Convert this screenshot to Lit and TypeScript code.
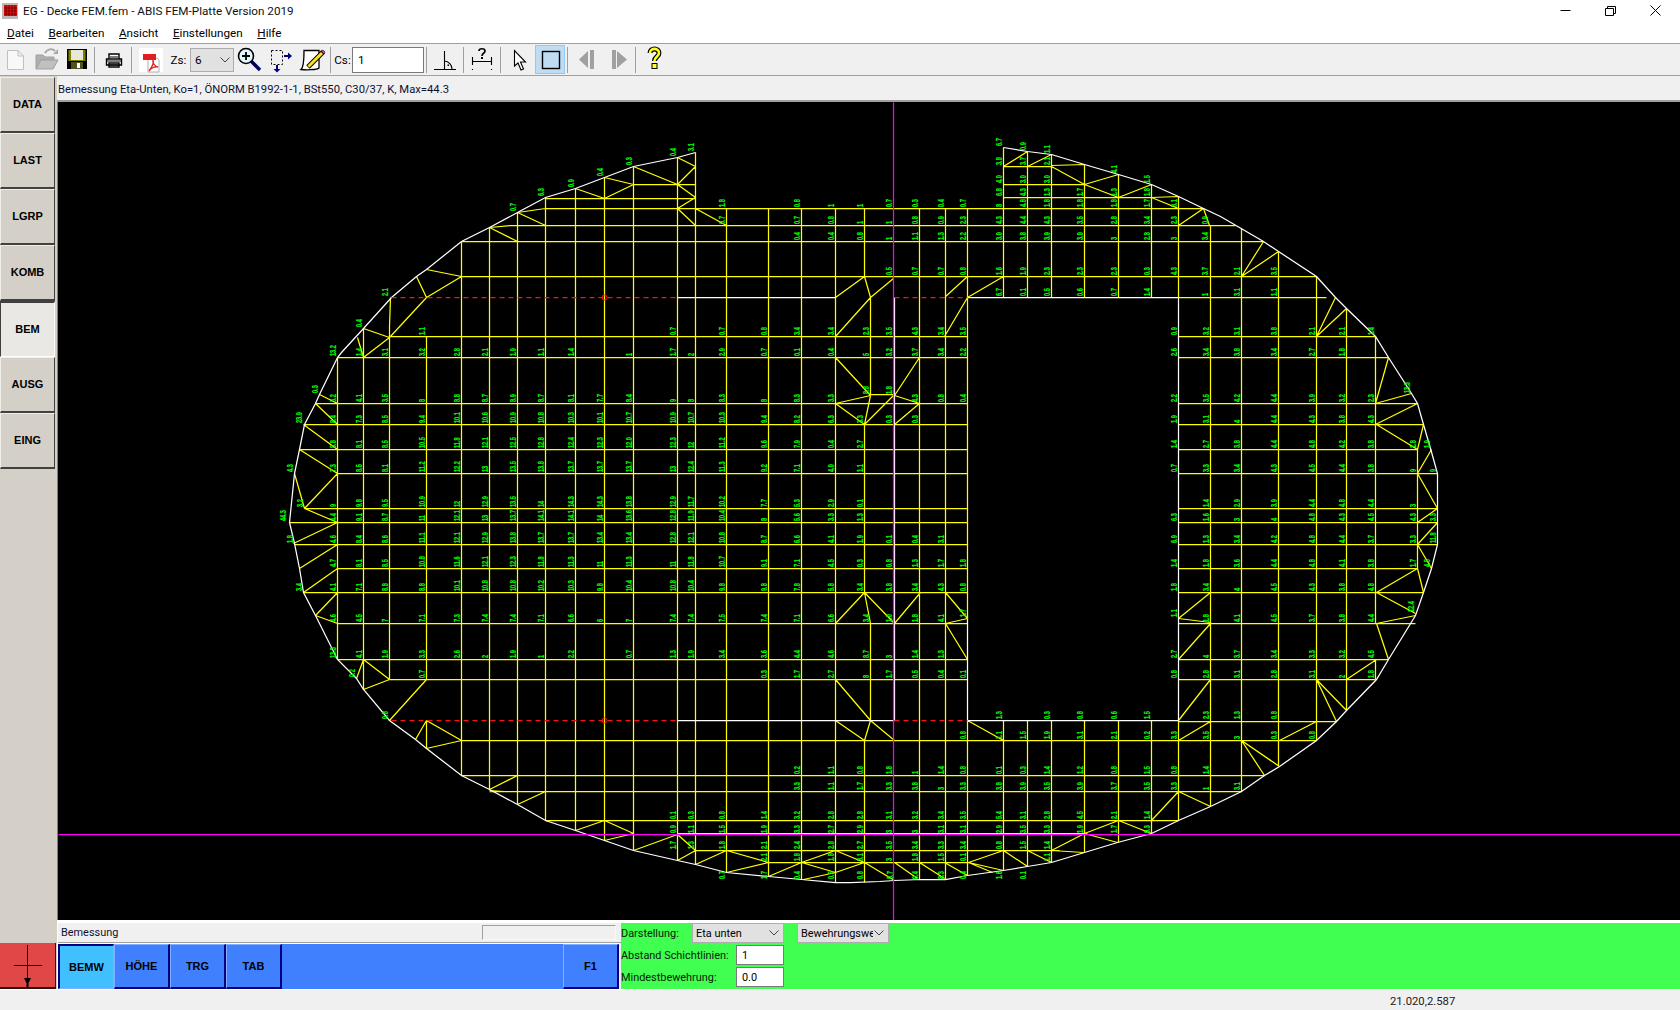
import { LitElement, html, css, svg } from "lit";
import { customElement } from "lit/decorators.js";

// mesh data, all coordinates are page pixels (svg viewBox starts at 58,102)
const OUTLINE =
  "1003,147 1027,151 1051,154 1084,164 1118,174 1151,184 1178,196 1203,208 1220,216 1263,241 1278,251 1316,276 1335,297 1346,308 1375,336 1388,357 1411,393 1417,403 1423,424 1430,448 1437,473 1437,544 1431,568 1423,592 1415,615 1388,659 1376,679 1346,710 1336,721 1316,740 1279,766 1264,775 1241,791 1210,806 1178,820 1151,833 1117,842 1084,852 1051,862 1027,866 1003,870 967,875 945,879 920,879 894,880 879,881 850,882 835,882 801,879 768,876 726,872 695,864 677,860 633,850 604,840 575,830 545,820 517,804 489,789 461,775 426,748 415,739 389,720 363,689 356,678 337,659 315,615 303,592 299,568 294,543 289,522 294,473 299,449 304,424 315,403 319,394 337,357 341,352 363,328 391,297 416,276 426,269 461,241 489,227 517,212 545,197 575,188 604,177 633,166 677,157 695,152";

// [y, x1, x2, x1, x2 ...]
const H: number[][] = [
  [166, 1003, 1051], [184, 633, 695, 1003, 1084], [197, 1003, 1151], [198, 545, 695],
  [208, 545, 1203], [225, 510, 1235], [241, 461, 1263], [276, 461, 1316], [297, 1178, 1326],
  [336, 389, 967, 1178, 1375], [357, 337, 967, 1178, 1388], [403, 315, 967, 1178, 1417],
  [424, 304, 967, 1178, 1423], [449, 299, 967, 1178, 1417], [473, 337, 967, 1178, 1437],
  [508, 305, 967, 1178, 1437], [522, 289, 967, 1178, 1437], [544, 294, 967, 1178, 1437],
  [568, 337, 967, 1178, 1417], [592, 303, 967, 1178, 1423], [623, 337, 967, 1178, 1415],
  [659, 337, 967, 1178, 1388], [679, 389, 967, 1178, 1375], [721, 1178, 1336],
  [740, 461, 1316], [775, 461, 1264], [791, 489, 1241], [820, 545, 1178],
  [833, 677, 1087], [850, 695, 1059], [862, 768, 968],
];

// [x, y1, y2, y1, y2 ...]
const V: number[][] = [
  [337, 357, 659], [363, 328, 689], [389, 326, 679], [426, 336, 679, 720, 748],
  [461, 241, 775], [489, 227, 789], [517, 212, 804], [545, 197, 820], [575, 188, 830],
  [604, 177, 840], [633, 166, 850], [677, 157, 860], [695, 152, 864], [726, 208, 872],
  [768, 208, 876], [801, 208, 879], [835, 208, 882], [864, 208, 276, 424, 592, 740, 882],
  [870, 297, 395, 623, 720], [919, 208, 879], [945, 208, 879], [967, 208, 618, 720, 875],
  [1003, 147, 297, 720, 870], [1027, 151, 297, 720, 866], [1051, 154, 297, 720, 862],
  [1084, 164, 297, 720, 852], [1118, 174, 297, 720, 842], [1151, 184, 297, 720, 833],
  [1178, 196, 297, 720, 820], [1210, 225, 806], [1241, 228, 791], [1278, 251, 766],
  [1316, 276, 740], [1346, 308, 710], [1375, 336, 623, 659, 679], [1417, 449, 568],
];

const D =
  "677,157,695,166 695,166,677,184 677,184,695,197 695,197,677,208 677,208,695,225 695,208,726,225 633,166,677,184 604,177,633,184 633,184,604,198 575,188,604,198 517,212,545,208 517,212,545,225 489,227,510,225 489,227,517,241 426,269,461,276 426,297,461,276 416,276,426,297 426,297,389,337 363,328,389,337 389,337,363,357 357,337,363,357 390,297,389,326 319,394,337,403 315,403,337,424 " +
  "303,424,337,449 299,449,337,473 294,473,304,508 304,508,337,473 304,508,337,522 293,543,337,522 299,568,337,544 303,592,337,568 315,615,337,592 315,615,337,623 363,659,389,679 363,659,356,678 363,689,389,679 389,720,426,679 426,720,415,739 426,720,461,740 426,748,461,740 517,775,489,789 489,790,504,791 517,804,545,791 604,820,575,830 604,820,633,833 604,840,633,833 " +
  "633,850,677,834 677,834,695,850 677,860,695,850 695,864,726,850 726,850,768,862 726,872,768,862 768,876,801,862 801,862,835,872 835,872,803,879 835,850,801,862 835,850,864,862 835,872,864,862 864,862,894,880 894,862,917,878 919,862,944,878 944,862,967,875 " +
  "968,862,1003,850 968,862,992,872 968,862,1003,870 1003,850,1027,866 1027,850,1051,862 1051,850,1083,852 1051,850,1084,833 1084,833,1118,820 1118,820,1151,833 1084,833,1117,842 1151,820,1178,791 1178,791,1210,806 1178,740,1210,721 1241,740,1264,775 1241,740,1279,766 1279,740,1316,721 1316,679,1336,721 1316,679,1346,710 1346,679,1376,659 1376,623,1388,659 1376,623,1415,615 1376,592,1415,613 1376,592,1417,568 1417,568,1423,592 1417,544,1431,568 1417,544,1437,522 1417,522,1437,508 1417,473,1437,508 1417,473,1431,449 1417,449,1423,424 1376,424,1417,449 " +
  "1375,403,1411,393 1375,403,1388,357 1375,424,1417,403 1316,336,1335,297 1316,336,1346,308 1241,276,1263,241 1241,276,1278,251 1178,618,1210,592 1178,618,1210,622 1178,659,1210,623 1178,720,1210,679 835,623,864,592 864,592,870,623 864,592,894,623 894,623,920,592 945,592,967,618 945,623,967,618 945,623,967,659 835,679,870,720 870,720,894,740 870,720,864,740 835,720,864,740 967,720,1003,740 " +
  "835,297,864,276 864,276,870,297 835,336,870,297 870,297,893,278 944,297,967,276 967,297,1003,276 944,336,967,297 835,357,870,395 835,403,870,395 835,403,864,424 870,395,864,424 864,424,893,395 870,394,893,394 894,395,919,357 894,395,919,403 894,424,919,403 1003,166,1027,151 1027,166,1051,154 1051,166,1084,184 1084,184,1118,197 1084,184,1118,174 1118,197,1151,184 1151,197,1178,208 1178,225,1203,208 1203,208,1209,225 1051,165,1084,164 1151,197,1178,196";

const L = [337, 363, 389, 426, 461, 489, 517, 545, 575, 604, 633, 677, 695, 726, 768, 801, 835];
const C = [864, 893, 919, 945, 967];
const R = [1210, 1241, 1278, 1316, 1346, 1375];
const T = [1003, 1027, 1051, 1084, 1118, 1151, 1178];

type Lab = [number, number, string];
const labels: Lab[] = [];
const row = (y: number, cols: number[], vals: string) =>
  vals.split(" ").forEach((v, i) => {
    if (v !== "-") labels.push([cols[i], y, v]);
  });

row(152, [695], "3.1"); row(157, [677], "0.4"); row(166, [633], "0.3"); row(177, [604], "0.4");
row(188, [575], "0.9"); row(197, [545], "6.3"); row(212, [517], "0.7"); row(297, [389], "2.1");
row(328, [363], "0.4"); row(336, [426], "1.1"); row(394, [319], "0.3"); row(424, [303], "23.9");
row(473, [294], "4.3"); row(508, [304], "3.2"); row(522, [287], "44.3"); row(544, [294], "1.8");
row(592, [303], "3.4"); row(678, [356], "0.2"); row(720, [389], "0.8");
row(208, [726, 801, 893, 919, 945, 967], "1.8 0.8 0.7 0.3 0.4 0.7");
row(208, [835, 864], "1 1");
row(225, [726, 801, 835, 864, 893, 919, 945, 967], "0.7 0.7 0.8 1 1 0.8 0.9 2.3");
row(241, [801, 835, 864, 893, 919, 945, 967], "0.4 0.4 0.8 1 1.1 1.3 2.2");
row(276, [893, 919, 945, 967], "0.5 0.7 0.7 0.8");
row(336, [677, 726, 768, 801, 835, 870, 893, 919, 945, 967], "0.7 0.7 0.8 3.4 3.4 2.3 3.5 4.3 3.4 3.5");
row(357, L, "13.2 1.4 3.1 3.2 2.8 2.1 1.9 1.1 1.4 - 1 1.7 2 2.9 0.7 0.1 0.4");
row(357, [870, 893, 919, 945, 967], "5 3.2 3.7 3.4 2.2");
row(403, L, "3.2 4.1 3.5 8 8.8 8.7 8.9 8.7 8.1 7.7 8.4 9 8 8.3 8 8.3 3.3");
row(395, [870, 893], "8.8 1.8");
row(403, [919, 945, 967], "4.3 0.8 0.4");
row(424, L, "8.4 7.3 8.5 9.4 10.1 10.6 10.9 10.8 10.3 10.1 10.7 10.9 10.7 10.3 9.4 8.2 6.3");
row(424, C, "3.3 0.3 0.3 - -");
row(449, L, "8.8 8.1 8.5 10.5 11.8 12.1 12.5 12.8 12.4 12.3 12.0 12.3 12 11.2 9.6 7.9 0.4");
row(449, [864], "2.7");
row(473, L, "7.3 8.5 8.1 11.2 12.2 13 13.5 13.8 13.7 13.7 13.7 13 12.4 11.3 9.2 7.1 4.0");
row(473, [864], "1.1");
row(508, L, "9 9.8 9.5 10.9 12 12.9 13.5 14 14.3 14.3 13.8 12.9 11.7 10.2 7.7 5.3 2.9");
row(508, [864], "0.1");
row(522, L, "4.4 9.1 8.7 11 12.1 13 13.7 14.1 14.1 14 13.6 12.8 11.9 10.4 8 5.6 3.3");
row(522, [864], "1.3");
row(544, L, "4.6 8.4 8.6 11.1 12.1 12.9 13.8 13.7 13.7 13.4 13.4 12.8 12.1 10.8 8.7 6.6 4.1");
row(544, C, "1.9 0.1 0.4 3.1 -");
row(568, L, "4.7 8.1 8.5 10.8 11.6 12.1 12.3 11.8 11.3 11 11.3 11 11.8 10.7 9.1 7.1 4.5");
row(568, C, "0.3 0.8 1.3 1.7 1.8");
row(592, L, "4.1 7.1 8.8 8.8 10.1 10.8 10.8 10.2 10.3 9.8 10.4 10.8 10.4 9.8 9.8 7.8 5.8");
row(592, C, "3.4 3.8 3.4 4.3 0.8");
row(623, L, "4.6 4.5 7 7.1 7.3 7.4 7.4 7.1 6.6 6 7 7.4 7.4 7.5 7.4 7.1 6.6");
row(623, [870, 893, 919, 945], "3.4 1.0 1.8 4.1");
row(618, [967], "1.7");
row(659, L, "13.3 4.1 1.9 3.3 2.6 2 1.9 1 2.2 - 0.7 1.3 1.9 3.4 3.6 4.4 4.6");
row(659, [870, 893, 919, 945], "8.7 3 1.4 1.3");
row(679, [426, 768, 801, 835, 870, 893, 919, 945, 967], "0.7 0.3 1.7 2.7 8 1.7 0.5 0.4 0.1");
row(720, [1003, 1051, 1084, 1118, 1151], "1.3 0.3 0.8 0.6 1.5");
row(720, [1210, 1241, 1278], "2.3 1.3 0.8");
row(740, [967, 1003, 1027, 1051, 1084, 1118, 1151, 1178, 1210, 1241, 1278, 1316], "0.8 1.1 1.5 1.9 3.1 2.1 0.2 3.3 3.5 3 0.3 0.8");
row(775, [801, 835, 864, 893, 919, 945, 967, 1003, 1027, 1051, 1084, 1118, 1151, 1178, 1210], "0.2 1.1 0.8 1.8 1 1.4 0.8 0.1 0.3 1.4 1.2 0.8 1.5 0.8 1.4");
row(791, [801, 835, 864, 893, 919, 945, 967, 1003, 1027, 1051, 1084, 1118, 1151, 1178, 1210, 1241], "3.3 1.1 1.7 3.3 3.8 3 3.3 3.8 3.9 3.5 3.9 3.7 3.5 3.3 1 3.1");
row(820, [677, 695, 726, 768, 801, 835, 864, 893, 919, 945, 967, 1003, 1027, 1051, 1084, 1118, 1151], "0.1 0.3 0.8 1.4 3.2 2.8 2.8 3.1 3.2 3.4 3.5 5.4 3.1 2.8 4.5 2.1 1.4");
row(834, [677, 695, 726, 768, 801, 835, 864, 893, 919, 945, 967, 1003, 1027, 1051, 1084, 1118, 1151], "0.9 1.1 1.5 1.9 3.3 2.7 2.9 3 3 3.1 3.1 2.9 3.5 3.3 1.9 1.7 0.3");
row(850, [677, 695, 726, 768, 801, 835, 864, 893, 919, 945, 967, 1003, 1027, 1051], "1.7 1.3 1.8 2.1 2.4 2.8 2.7 3.5 3.4 3.3 3.4 0.8 1.5 1.4");
row(862, [768, 801, 835, 864, 893, 919, 945, 967, 1051], "2.1 1.8 1.8 3.1 3 1.8 1.5 0.1 1.1");
row(880, [726, 768, 801, 835, 864, 894, 919, 945, 967, 1003, 1027], "0.7 1.7 0.4 0.5 0.8 5.7 0.4 8.3 0.4 1.6 0.1");
// around the hole, x = 1178 and the field to the right
row(225, [1003, 1027, 1051, 1084, 1118, 1151, 1178, 1209], "4.3 4.4 4.3 3.5 2.8 3.4 2.3 0.9");
row(241, [1003, 1027, 1051, 1084, 1118, 1151, 1178, 1209], "3.0 3.8 3.9 3.0 3 2.8 3 3.4");
row(276, [1003, 1027, 1051, 1084, 1118, 1151, 1178, 1209, 1241, 1278], "1.6 1.9 2.3 2.3 2.3 0.3 4.3 3.7 2.1 3.5");
row(297, [1003, 1027, 1051, 1084, 1118, 1151], "6.7 0.1 0.5 0.6 0.7 1.4");
row(297, [1209, 1241, 1278], "1 3.1 1.1");
row(147, [1003], "6.7"); row(151, [1027], "0.9"); row(154, [1051], "1.1"); row(174, [1118], "4.1"); row(184, [1151], "1.5");
row(166, T, "3.8 3.7 2.1 - - - -");
row(184, T, "4.0 3.0 3.0 - - - -");
row(197, T, "6.8 4.3 1.3 1.7 1.3 1.8 -");
row(208, T, "8 4.8 1.8 1.8 1.8 1.7 3.1");
row(336, [1178], "0.9"); row(357, [1178], "2.6"); row(403, [1178], "2.2"); row(424, [1178], "1.9");
row(449, [1178], "1.4"); row(473, [1178], "0.7"); row(522, [1178], "6.3"); row(544, [1178], "6.9");
row(568, [1178], "1.4"); row(592, [1178], "1.8"); row(618, [1178], "1.1"); row(659, [1178], "2.7"); row(679, [1178], "0.8");
row(336, R, "3.2 3.1 3.8 2.1 2.1 1.4");
row(357, R, "3.4 3.8 3.4 2.7 1.8 -");
row(403, R, "3.5 4.2 4.4 3.9 3.2 2.3");
row(394, [1411], "13.3");
row(424, R, "3.1 4 4.4 4.3 3.8 4.3");
row(449, R, "2.7 3.8 4.4 4.8 4.2 3.8");
row(449, [1417, 1431], "1.8 1.9");
row(473, R, "3.3 3.4 4.3 4.5 4.4 3.8");
row(473, [1417, 1437], "9 9");
row(508, R, "1.4 2.9 3.9 4.4 4.8 4.4");
row(508, [1417], "3");
row(522, R, "1.6 3 4 4.8 4.3 4.5");
row(522, [1417, 1437], "4.3 3.3");
row(544, R, "1.3 3.4 4.2 4.8 4.4 3.7");
row(544, [1417, 1437], "3.3 11.8");
row(568, R, "1.8 3.6 4.4 4.8 4.1 3.8");
row(568, [1417, 1431], "1.7 4.5");
row(592, R, "3.4 4 4.5 4.3 3.8 4.8");
row(623, R, "1.8 4.1 4.5 3.7 3.8 4.4");
row(613, [1415], "12.4");
row(659, R, "4 3.7 3.4 3.3 3.2 4.5");
row(679, R, "2.8 3.1 2.8 3.1 2 1.8");

const hPath = H.map(([y, ...xs]) => {
  let s = "";
  for (let i = 0; i < xs.length; i += 2) s += `M${xs[i]} ${y}H${xs[i + 1]}`;
  return s;
}).join("");
const vPath = V.map(([x, ...ys]) => {
  let s = "";
  for (let i = 0; i < ys.length; i += 2) s += `M${x} ${ys[i]}V${ys[i + 1]}`;
  return s;
}).join("");
const dPath = D.split(" ")
  .map((s) => {
    const [a, b, c, e] = s.split(",");
    return `M${a} ${b}L${c} ${e}`;
  })
  .join("");

const chevron = html`<svg class="chev" width="10" height="6" viewBox="0 0 10 6"><path d="M.5 .5L5 5L9.5 .5" fill="none" stroke="#444"/></svg>`;

@customElement("app-root")
export class AppRoot extends LitElement {
  static styles = css`
    * { box-sizing: border-box; }
    :host {
      display: flex;
      flex-direction: column;
      width: 1680px;
      height: 1010px;
      overflow: hidden;
      background: #f0f0f0;
      color: #000;
      font: 11.7px Roboto, "Liberation Sans", sans-serif;
    }
    .title { display: flex; align-items: center; height: 22px; background: #fff; padding-left: 2px; }
    .title .name { margin-left: 5px; color: #111; }
    .winbtns { margin-left: auto; display: flex; padding-right: 2px; }
    .winbtns svg { width: 45px; height: 22px; }
    .menu { display: flex; align-items: center; gap: 14.6px; height: 21px; background: #fff; padding-left: 7px; }
    .toolbar {
      display: flex; align-items: center; height: 33px; padding-left: 4px;
      border-top: 1px solid #a0a0a0; border-bottom: 1px solid #a0a0a0;
    }
    .toolbar > svg { flex: none; display: block; }
    .sep { width: 5px; height: 26px; display: flex; justify-content: center; flex: none; }
    .sep::after { content: ""; width: 1px; background: #a0a0a0; }
    .lbl { flex: none; text-align: center; }
    .zs { width: 23px; }
    .cs { width: 19px; }
    .sel {
      display: flex; align-items: center; flex: none; height: 20px; padding: 0 4px 0 3px;
      background: #e1e1e1; border: 1px solid #adadad; white-space: nowrap; overflow: hidden;
    }
    .sel span { flex: 1; overflow: hidden; }
    .sel .chev { flex: none; margin-left: 1px; }
    .zsel { width: 44px; height: 24px; padding-left: 4px; padding-right: 3px; }
    .csin { width: 72px; height: 26px; flex: none; border: 1px solid #7a7a7a; background: #fff; font: inherit; padding: 0 5px; margin: 0; }
    .active { background: #c0dcf3; }
    .main { display: flex; flex: 1; min-height: 0; }
    .side { width: 57px; flex: none; display: flex; flex-direction: column; background: #d4d0c8; padding-top: 1px; }
    .sbtn {
      width: 55px; height: 56px; display: flex; align-items: center; justify-content: center;
      font: bold 11px "Liberation Sans", sans-serif; background: #d4d0c8; padding-bottom: 1px;
      border-top: 1px solid #f0eee8; border-left: 1px solid #f0eee8;
      border-right: 1px solid #404040; border-bottom: 2px solid #404040;
    }
    .sbtn.on { background: #e9e8e4; border-color: #404040 #fff #fff #404040; border-width: 2px 1px 1px 1px; }
    .red {
      margin-top: auto; width: 56px; height: 46px; background: #e04848; flex: none;
      border-bottom: 2px solid #301010; border-right: 1px solid #301010;
    }
    .red svg { display: block; }
    .right { flex: 1; min-width: 0; display: flex; flex-direction: column; }
    .info {
      height: 26px; display: flex; align-items: center; padding: 3px 0 0 1px;
      border-bottom: 2px solid #a0a0a0; color: #101030; font-size: 11.25px;
    }
    .view { height: 818px; border-left: 1px solid #808080; background: #000; }
    .view svg { display: block; }
    .view text { font: bold 8.5px "Liberation Sans", sans-serif; fill: #00ff00; stroke: #00ff00; stroke-width: .15px; }
    .bottom { display: flex; flex: 1; border-top: 3px solid #fff; border-left: 1px solid #fff; font-size: 10.9px; }
    .bleft { width: 563px; flex: none; display: flex; flex-direction: column; }
    .bem { height: 20px; display: flex; align-items: center; padding-left: 3px; border-bottom: 1px solid #a0a0a0; color: #101030; }
    .bembox { margin-left: auto; margin-right: 5px; width: 134px; height: 15px; border: 1px solid; border-color: #a0a0a0 #f8f8f8 #f8f8f8 #a0a0a0; }
    .blue { flex: 1; width: 561px; background: #4080ff; display: flex; border-top: 1px solid #fff; }
    .bbtn {
      width: 56px; display: flex; align-items: center; justify-content: center; padding-bottom: 1px;
      font: bold 11px "Liberation Sans", sans-serif;
      border-top: 1px solid #80b0ff; border-left: 1px solid #80b0ff;
      border-right: 2px solid #000080; border-bottom: 2px solid #000080;
    }
    .bbtn.on { background: #40c0ff; border-color: #000080 #80b0ff #80b0ff #000080; border-width: 2px 1px 1px 2px; }
    .bbtn.f1 { margin-left: auto; }
    .green { flex: 1; background: #40ff50; display: flex; flex-direction: column; gap: 2px; color: #082008; }
    .grow { display: flex; align-items: center; height: 20px; white-space: nowrap; }
    .gl1 { width: 71px; }
    .gl2 { width: 115px; }
    .green .sel { width: 92px; color: #000; }
    .green .sel + .sel { margin-left: 13px; }
    .green input { width: 48px; height: 20px; border: 1px solid #7a7a7a; background: #fff; font: inherit; padding: 0 5px; margin: 0; }
    .status { height: 21px; border-top: 1px solid #fff; display: flex; align-items: center; padding: 2px 0 0 1390px; color: #202020; font-size: 11.3px; }
  `;

  private tool() {
    return html`<div class="toolbar">
      <svg width="27" height="31" viewBox="0 0 27 31"><path d="M3.5 6.5H14L19.5 12V25.5H3.5ZM14 6.5V12H19.5" fill="#f8f8f8" stroke="#c0c0c0"/></svg>
      <svg width="32" height="31" viewBox="0 0 32 31"><path d="M5 25V11H12L14 13H23V16H10L5 25Z" fill="#b0b0b0" stroke="#a0a0a0"/><path d="M5 25L10 16H27L22 25Z" fill="#c0c0c0" stroke="#a0a0a0"/><path d="M14 9C16 5 21 4 24 7" fill="none" stroke="#a8a8a8" stroke-width="2"/><path d="M22 10H27V5Z" fill="#a8a8a8"/></svg>
      <svg width="29" height="31" viewBox="0 0 29 31"><rect x="4" y="5" width="20" height="20" fill="#000"/><rect x="5.5" y="6" width="17" height="11" fill="#808000"/><rect x="8" y="6" width="12" height="10" fill="#e8e8d8"/><rect x="8" y="18" width="12" height="7" fill="#505020"/><rect x="14" y="19" width="3" height="5" fill="#fff"/></svg>
      <div class="sep"></div>
      <svg width="32" height="31" viewBox="-1 0 32 31"><path d="M11 15V10H21V15M8.5 15H23.5V21H8.5ZM11 19H21V23H11Z" fill="#fff" stroke="#000" stroke-width="1.4"/><path d="M9 17H23M12 13H20M12 21H20" stroke="#000"/></svg>
      <div class="sep"></div>
      <svg width="33" height="31" viewBox="-1 0 33 31"><rect x="4" y="4" width="24" height="24" fill="#fff"/><path d="M13 14V28H24V16L22 14Z" fill="#fff" stroke="#b0b0b0"/><rect x="8" y="10" width="13" height="6" fill="#e02020"/><path d="M14 27C17 23 19 18 18 16C17 18 20 23 23 23C20 22 16 24 14 27Z" fill="none" stroke="#e02020" stroke-width="1.3"/></svg>
      <div class="lbl zs">Zs:</div>
      <div class="sel zsel"><span>6</span>${chevron}</div>
      <svg width="31" height="31" viewBox="0 0 31 31"><path d="M17 17L26 26" stroke="#000060" stroke-width="3.4"/><circle cx="12" cy="12" r="7.5" fill="#e0f8ff" stroke="#000" stroke-width="1.6"/><path d="M8 12H16M12 8V16" stroke="#000" stroke-width="1.8"/></svg>
      <svg width="31" height="31" viewBox="0 0 31 31"><rect x="6.5" y="6.5" width="11" height="14" fill="none" stroke="#000" stroke-dasharray="2 2"/><path d="M19 12H23" stroke="#000080" stroke-width="2"/><path d="M23 8.5L27 12L23 15.5Z" fill="#000080"/><path d="M12 21V25" stroke="#000080" stroke-width="2"/><path d="M8.5 25H15.5L12 28.5Z" fill="#000080"/></svg>
      <svg width="32" height="31" viewBox="0 0 32 31"><path d="M8 6.5H23V24C21 26 10 26 5 25.5C7 24 8 20 8 6.5Z" fill="#fff" stroke="#000" stroke-width="1.3"/><path d="M12 23L27 8" stroke="#000" stroke-width="5"/><path d="M12.5 22.5L26 9" stroke="#ffe020" stroke-width="3"/><path d="M25 7L28 10L29 8L27 6Z" fill="#e040c0" stroke="#000" stroke-width=".6"/></svg>
      <div class="sep"></div>
      <div class="lbl cs">Cs:</div>
      <input class="csin" value="1" />
      <div class="sep"></div>
      <svg width="32" height="31" viewBox="0 0 32 31"><path d="M5 25.5H27M15.5 7V25.5M15.5 17A8 8 0 0 1 23 25" fill="none" stroke="#000" stroke-width="1.1"/><rect x="18.5" y="20.5" width="1.5" height="1.5"/></svg>
      <div class="sep"></div>
      <svg width="32" height="31" viewBox="0 0 32 31"><path d="M6 17.5H26M6.5 13V21M25.5 13V21M6.5 25V26M25.5 25V26" fill="none" stroke="#000" stroke-width="1.1"/><path d="M13 7C13 4 19 4 19 7C19 9.5 16 9 16 12" fill="none" stroke="#000" stroke-width="1.7"/><rect x="15" y="13" width="2" height="2"/></svg>
      <div class="sep"></div>
      <svg width="32" height="31" viewBox="0 0 32 31"><path d="M11.5 6.5V22L15 19L18 26L20.5 25L17.5 18H22.5Z" fill="#fff" stroke="#000" stroke-width="1.1"/></svg>
      <svg class="active" width="30" height="29" viewBox="0 0 30 29"><rect x=".5" y=".5" width="29" height="28" fill="none" stroke="#90c8f6"/><rect x="7.5" y="6.5" width="17" height="17" fill="none" stroke="#000" stroke-width="1.4"/></svg>
      <div class="sep"></div>
      <svg width="32" height="31" viewBox="-1 0 32 31"><path d="M8 15.5L17 7V24Z" fill="#a0a0a0"/><rect x="19" y="6" width="4" height="19" fill="#a0a0a0"/></svg>
      <svg width="31" height="31" viewBox="-2 0 31 31"><rect x="8" y="6" width="4" height="19" fill="#a0a0a0"/><path d="M13 7L23 15.5L13 24Z" fill="#a0a0a0"/></svg>
      <div class="sep"></div>
      <svg width="33" height="31" viewBox="0 0 33 31"><path d="M12 9C12 3.5 21 3.5 21 9C21 13 16.5 12.5 16.5 17" fill="none" stroke="#000" stroke-width="5"/><path d="M12 9C12 3.5 21 3.5 21 9C21 13 16.5 12.5 16.5 17" fill="none" stroke="#ffff20" stroke-width="2.6"/><rect x="14" y="19.5" width="5" height="5" fill="#ffff20" stroke="#000"/></svg>
    </div>`;
  }

  private mesh() {
    return html`<svg width="1622" height="818" viewBox="58 102 1622 818">
      <g transform="translate(.5 .5)" fill="none" stroke-width="1.25">
        <path d="${hPath}${vPath}${dPath}" stroke="#ffff00"/>
        <path d="M677 297H835M967 297H1178M677 720H894M967 720H1178M967 618V720M1178 297V720M894 297V720" stroke="#fff"/>
        <polyline points="${OUTLINE}" stroke="#fff"/>
      </g>
      ${labels.map(([x, y, t]) => svg`<text transform="translate(${x - 1} ${y - 1}) rotate(-90) scale(.66 1)">${t}</text>`)}
      <g transform="translate(.5 .5)" fill="none">
        <path d="M391 297H677M894 297H967M391 720H677M894 720H967" stroke="#ff1010" stroke-width="1.25" stroke-dasharray="5 4"/>
        <circle cx="604" cy="297" r="2.5" stroke="#ff1010"/>
        <circle cx="604" cy="720" r="2.5" stroke="#ff1010"/>
        <path d="M893 102V920M58 834H1680" stroke="#ff00ff" stroke-width="1.25"/>
      </g>
    </svg>`;
  }

  render() {
    return html`
      <div class="title">
        <svg width="16" height="16" viewBox="0 0 16 16"><rect width="16" height="16" fill="#c0b8b8"/><rect x="2" y="2" width="13" height="11" fill="#e81010"/><path d="M4 2V13M7 2V13M10 2V13M13 2V13M2 5H15M2 8H15M2 11H15" stroke="#500000" stroke-width=".7"/></svg>
        <span class="name">EG - Decke FEM.fem - ABIS FEM-Platte Version 2019</span>
        <div class="winbtns">
          <svg viewBox="0 0 45 22"><path d="M17.5 10.5H27.5" stroke="#000" fill="none"/></svg>
          <svg viewBox="0 0 45 22"><path d="M17.5 8.5H25.5V15.5H17.5ZM19.5 8.5V6.5H27.5V13.5H25.5" stroke="#000" fill="none"/></svg>
          <svg viewBox="0 0 45 22"><path d="M17.5 5.5L27.5 15.5M27.5 5.5L17.5 15.5" stroke="#000" fill="none"/></svg>
        </div>
      </div>
      <div class="menu">
        <span><u>D</u>atei</span><span><u>B</u>earbeiten</span><span><u>A</u>nsicht</span><span><u>E</u>instellungen</span><span><u>H</u>ilfe</span>
      </div>
      ${this.tool()}
      <div class="main">
        <div class="side">
          <div class="sbtn">DATA</div>
          <div class="sbtn">LAST</div>
          <div class="sbtn">LGRP</div>
          <div class="sbtn">KOMB</div>
          <div class="sbtn on">BEM</div>
          <div class="sbtn">AUSG</div>
          <div class="sbtn">EING</div>
          <div class="red">
            <svg width="55" height="44" viewBox="0 0 55 44"><path d="M14 22.5H42M27.5 2V44" stroke="#000" fill="none"/><path d="M24 35H31L28.5 40V44H26.5V40Z" fill="#000"/></svg>
          </div>
        </div>
        <div class="right">
          <div class="info">Bemessung Eta-Unten, Ko=1, ÖNORM B1992-1-1, BSt550, C30/37, K, Max=44.3</div>
          <div class="view">${this.mesh()}</div>
          <div class="bottom">
            <div class="bleft">
              <div class="bem">Bemessung<div class="bembox"></div></div>
              <div class="blue">
                <div class="bbtn on">BEMW</div>
                <div class="bbtn">HÖHE</div>
                <div class="bbtn">TRG</div>
                <div class="bbtn">TAB</div>
                <div class="bbtn f1">F1</div>
              </div>
            </div>
            <div class="green">
              <div class="grow">
                <div class="gl1">Darstellung:</div>
                <div class="sel"><span>Eta unten</span>${chevron}</div>
                <div class="sel"><span>Bewehrungswert</span>${chevron}</div>
              </div>
              <div class="grow"><div class="gl2">Abstand Schichtlinien:</div><input value="1" /></div>
              <div class="grow"><div class="gl2">Mindestbewehrung:</div><input value="0.0" /></div>
            </div>
          </div>
        </div>
      </div>
      <div class="status">21.020,2.587</div>
    `;
  }
}
